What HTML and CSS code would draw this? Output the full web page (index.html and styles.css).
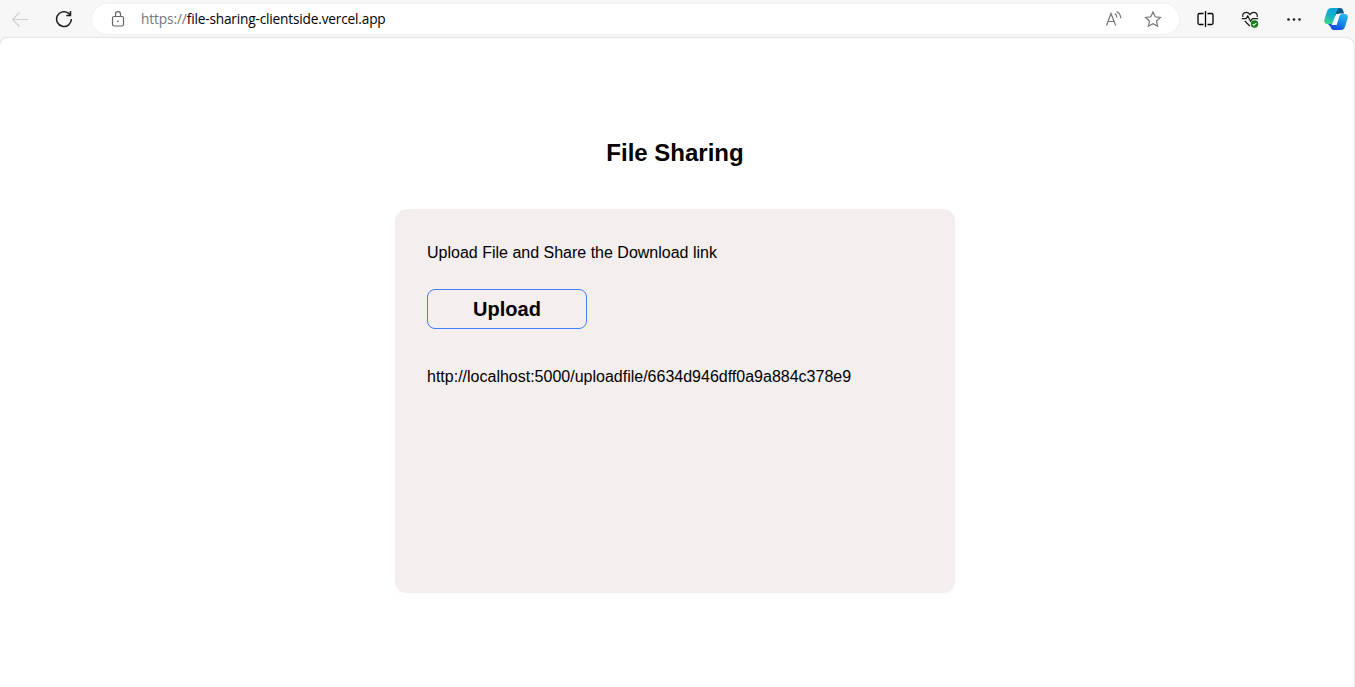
FILE: index.html
```html
<!DOCTYPE html>
<html lang="en">
<head>
<meta charset="utf-8">
<title>File Sharing</title>
<link rel="stylesheet" href="styles.css">
</head>
<body>
<header class="toolbar">
  <svg class="icon back" viewBox="0 0 18 18"><path d="M17 9.500H1.500M8.500 2.500l-7 7 7 7"/></svg>
  <svg class="icon reload" viewBox="0 0 18 18"><path d="M16.400 9A7.400 7.400 0 1 1 13.600 3.300L15.500 5M15.500 1v4.500H11.300"/></svg>
  <div class="address">
    <svg class="icon lock" viewBox="0 0 18 18"><rect x="3.500" y="6.500" width="11" height="9.500" rx="1.500"/><path d="M6.500 6.500V4.200a2.500 2.500 0 0 1 5 0v2.300"/><circle class="dot" cx="9" cy="11.300" r=".9"/></svg>
    <span class="url"><span class="scheme">https://</span>file-sharing-clientside.vercel.app</span>
    <svg class="icon read" viewBox="0 0 18 18"><path d="M1.500 15.500L6 3.500l4.700 12M3 11.500h6.200M9.800 3.500c1.300.8 2 2 2.100 4M11.500 1.500c2.700 1.400 4.200 3.600 4.200 6.800"/></svg>
    <svg class="icon star" viewBox="0 0 18 18"><path d="M9 2l2.200 4.800 5.200.6-3.900 3.600 1.100 5.200L9 13.700l-4.600 2.500L5.500 11 1.600 7.400l5.200-.6z"/></svg>
  </div>
  <svg class="icon split" viewBox="0 0 18 18"><path d="M7.500 3.500h-4A1.500 1.500 0 0 0 2 5v8a1.500 1.500 0 0 0 1.500 1.500h4M11.500 3.500h4A1.500 1.500 0 0 1 17 5v8a1.500 1.500 0 0 1-1.500 1.500h-4M9.500 1v16"/></svg>
  <svg class="icon health" viewBox="0 0 18 18"><path d="M1.800 7C1 2.500 6 .8 9 4.500 12 .8 17 2.500 16.200 7M.8 8.700H5L6.800 6l2.700 5.200 2-2.500h5.700M3.800 11l5 5"/><circle class="ok" cx="13.500" cy="14" r="3.700"/><path class="tick" d="M11.700 14l1.300 1.300 2.300-2.500"/></svg>
  <svg class="icon more" viewBox="0 0 18 18"><circle cx="3.500" cy="9.500" r="1.300"/><circle cx="9" cy="9.500" r="1.300"/><circle cx="14.500" cy="9.500" r="1.300"/></svg>
  <svg class="copilot" viewBox="0 0 24 24">
    <defs>
      <linearGradient id="teal" x1=".6" y1="0" x2=".3" y2="1"><stop offset="0" stop-color="#09a7dc"/><stop offset=".5" stop-color="#16b2cb"/><stop offset="1" stop-color="#42d483"/></linearGradient>
      <linearGradient id="blue" x1=".7" y1="0" x2=".2" y2="1"><stop offset="0" stop-color="#2bb5ee"/><stop offset=".5" stop-color="#148be9"/><stop offset="1" stop-color="#1646e0"/></linearGradient>
    </defs>
    <path fill="#075989" d="M11 1h5c2 0 2.800 1 3.300 3l.8 2.500h-4.300c-2 0-3 1-3.700 3L9 5z"/>
    <path fill="#1452df" d="M4 17c4-.1 5-1.500 5.500-2l3 3L13 23h-3c-2.100 0-2.800-1-3.400-3z"/>
    <path fill="#f7fbff" d="M12.300 7h4.500l-1.800 4.500-2.700 6.500H7.500z"/>
    <path fill="url(#teal)" d="M7.500 1h7.300c-1.500 1-2 2.400-2.600 4.500L9.800 13c-.7 2.500-1.600 4-4 4H3.300C.6 17-.2 14.800.5 12L3 4.500C3.700 2.200 5 1 7.500 1z"/>
    <path fill="url(#blue)" d="M18.500 7h2.200c2.700 0 3.600 2 2.900 4.400L21.300 19c-.8 2.700-2 4-4.700 4H9.500c1.800-.8 2.300-2.200 2.900-4.300l2.500-7.700c.7-2.500 1.400-4 3.600-4z"/>
  </svg>
</header>
<main class="page">
  <h1 class="title">File Sharing</h1>
  <section class="card">
    <p class="hint">Upload File and Share the Download link</p>
    <button class="upload">Upload</button>
    <p class="link">http://localhost:5000/uploadfile/6634d946dff0a9a884c378e9</p>
  </section>
</main>
</body>
</html>
```
FILE: styles.css
```css
* { box-sizing: border-box; }
body {
  margin: 0;
  height: 687px;
  overflow: hidden;
  display: flex;
  flex-direction: column;
  background: #f7f7f7;
  color: #000;
  font-family: "Liberation Sans", Arial, sans-serif;
}
.toolbar {
  height: 38px;
  flex: none;
  display: flex;
  align-items: center;
  padding: 0 7px 0 11px;
}
.icon {
  width: 18px;
  height: 18px;
  flex: none;
  fill: none;
  stroke: #1b1b1b;
  stroke-width: 1.2;
}
.back { stroke: #d0d0d0; }
.reload { margin-left: 26px; stroke-width: 1.5; }
.address {
  width: 1087px;
  height: 30px;
  flex: none;
  margin-left: 19px;
  padding: 0 17px;
  display: flex;
  align-items: center;
  border-radius: 15px;
  background: #fff;
  box-shadow: 0 0 3px rgba(0, 0, 0, .06);
}
.lock { stroke: #666; }
.lock .dot { fill: #666; stroke: none; }
.url {
  margin-left: 14px;
  flex: 1;
  font: 13.7px/18px "Open Sans", "Noto Sans", sans-serif;
  letter-spacing: -.19px;
  white-space: nowrap;
}
.scheme { color: #767676; letter-spacing: -.12px; }
.read { stroke: #767676; }
.star { margin-left: 21px; stroke: #767676; }
.split { margin-left: 17px; stroke: #000; stroke-width: 1.3; }
.health { margin-left: 27px; }
.health .ok { fill: #107c10; stroke: none; }
.health .tick { stroke: #fff; stroke-width: 1.1; }
.more { margin-left: 26px; fill: #1b1b1b; stroke: none; }
.copilot { width: 24px; height: 24px; flex: none; margin-left: auto; }
.page {
  flex: 1;
  margin-right: 1px;
  padding: 101px 4px 0 0;
  display: flex;
  flex-direction: column;
  align-items: center;
  background: #fff;
  border-radius: 7px 8px 0 0;
  box-shadow: 0 0 2px rgba(0, 0, 0, .25);
}
.title { margin: 0; font-size: 24px; line-height: 28px; }
.card {
  width: 560px;
  height: 384px;
  margin-top: 42px;
  padding: 32px;
  background: #f4eeee;
  border-radius: 12px;
  box-shadow: 0 4px 8px rgba(0, 0, 0, .02);
}
.hint, .link { margin: 0; font-size: 16px; line-height: 24px; }
.upload {
  display: block;
  width: 160px;
  height: 40px;
  margin: 24px 0 36px;
  padding: 0;
  border: 1px solid #3b82f6;
  border-radius: 8px;
  background: transparent;
  color: #000;
  font: bold 20px/38px "Liberation Sans", Arial, sans-serif;
}
```
